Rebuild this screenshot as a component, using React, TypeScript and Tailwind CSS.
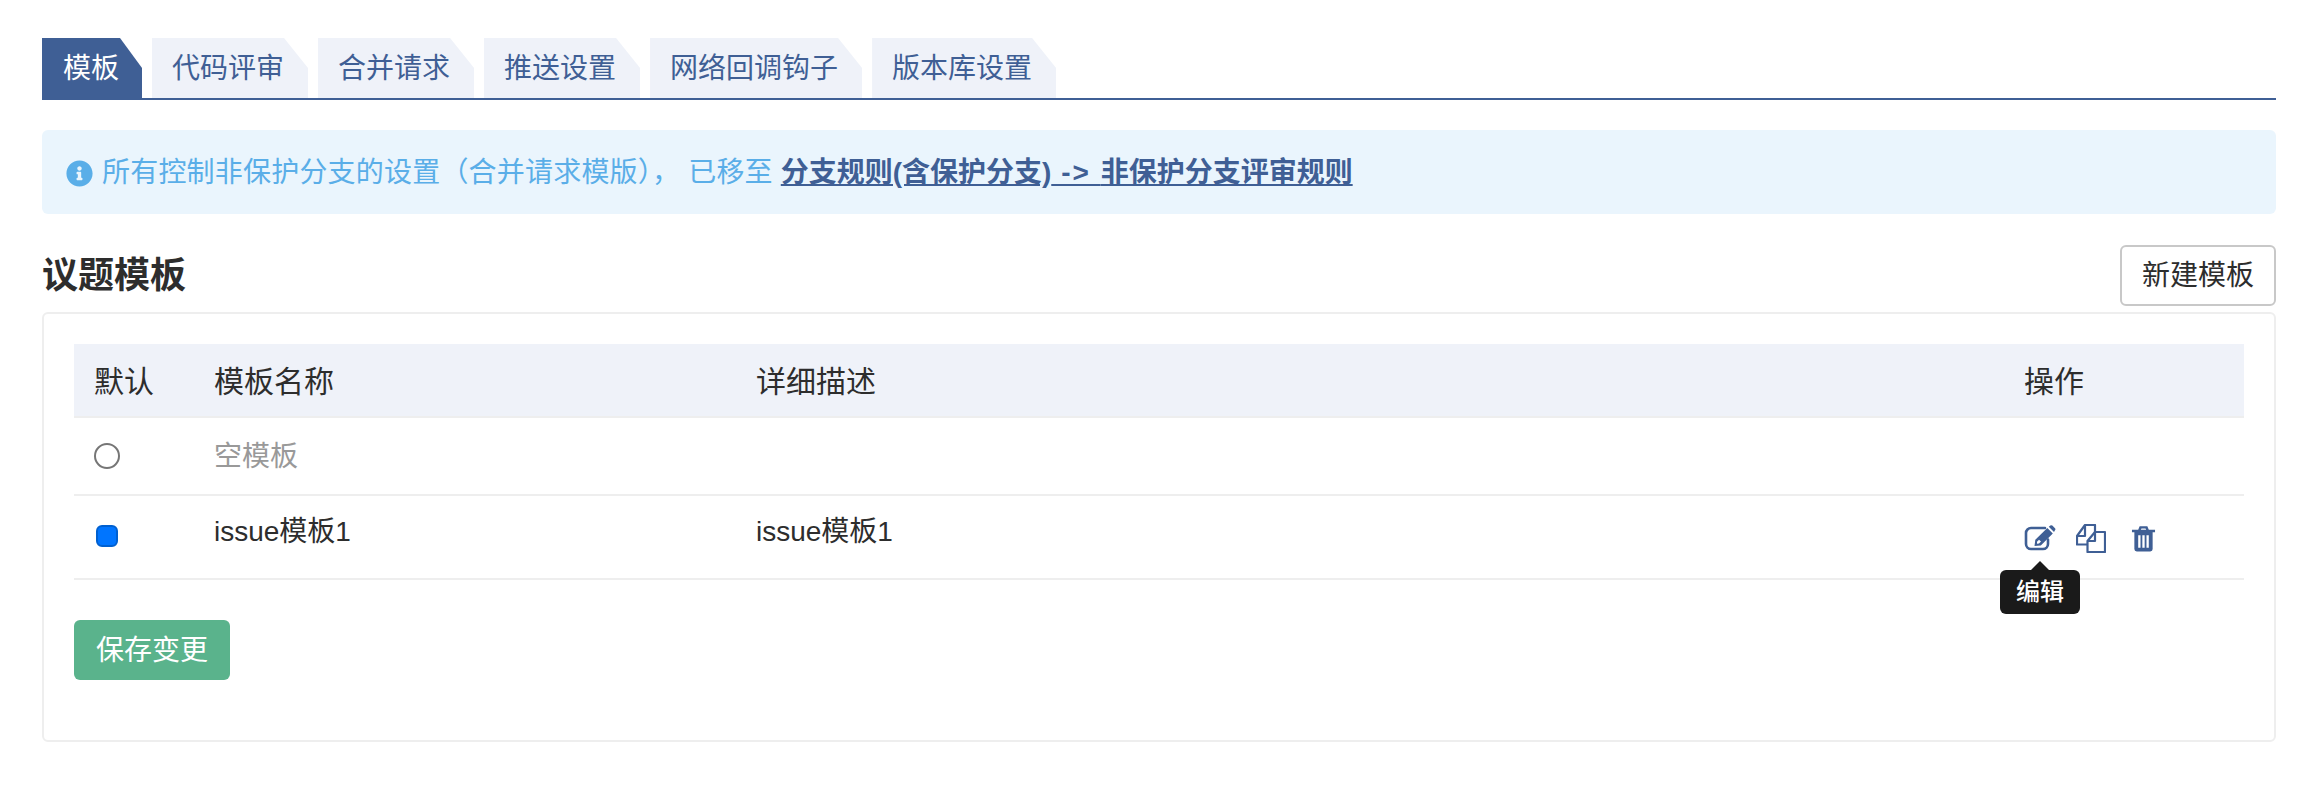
import React from 'react';
import { FaInfoCircle } from 'react-icons/fa';

const font = { fontFamily: '"Liberation Sans", "Noto Sans CJK SC", sans-serif' };

const tabs = ['模板', '代码评审', '合并请求', '推送设置', '网络回调钩子', '版本库设置'];

function EditIcon() {
  return (
    <svg width="32" height="26" viewBox="0 0 32 26" className="shrink-0">
      <path d="M21 3H7A5 5 0 0 0 2 8V19A5 5 0 0 0 7 24H19A5 5 0 0 0 24 19V14.500" fill="none" stroke="#3f5f95" strokeWidth="2.600" strokeLinecap="round" />
      <path fill="#3f5f95" fillRule="evenodd" d="M10.500 21 11.300 14.800 23.300 3 28.800 8.500 16.800 20.500ZM13 16.800 13 18.700 15 18.600 17 16.600 15 14.800Z" />
      <path fill="#3f5f95" d="M24.800 1.800 26.300.6a1.500 1.500 0 0 1 2 0L31 3.200a1.500 1.500 0 0 1 0 2L30 7Z" />
    </svg>
  );
}

function CopyIcon() {
  return (
    <svg width="30" height="29" viewBox="0 0 30 29" fill="none" stroke="#3f5f95" strokeWidth="2.200" strokeLinejoin="round" className="shrink-0">
      <path d="M11 20.500H1V12L9 1H19V8" />
      <path d="M9 1V12H1" />
      <path d="M11.500 28V17L19 8H29V28Z" />
      <path d="M19 8V17H11.500" />
    </svg>
  );
}

function TrashIcon() {
  return (
    <svg width="25" height="27" viewBox="0 0 26 28" className="shrink-0">
      <path fill="#3f5f95" d="M1 5h6.500L9 1.200h8L18.500 5H25v2.500h-2.500V25a2.500 2.500 0 0 1-2.500 2.500H6A2.500 2.500 0 0 1 3.500 25V7.500H1ZM10.200 5h5.600l-.7-1.500h-4.200ZM7.500 10.500v13h2.400v-13ZM11.800 10.500v13h2.400v-13ZM16.100 10.500v13h2.400v-13Z" fillRule="evenodd" />
    </svg>
  );
}

export default function App() {
  return (
    <div className="bg-white h-[786px] pl-[42px] pr-[28px] pt-[38px] text-[#2d2d2d] text-[28px] leading-[40px]" style={font}>
      <div className="flex gap-[10px] border-b-2 border-[#3f5f95]">
        {tabs.map((t, i) => (
          <div
            key={t}
            className={
              i === 0
                ? 'h-[60px] pl-[21px] pr-[23px] pt-[2px] flex items-center bg-[#3f5f95] text-white [clip-path:polygon(0_0,calc(100%-22px)_0,100%_30px,100%_100%,0_100%)]'
                : 'h-[60px] pl-[20px] pr-[24px] pt-[2px] flex items-center bg-[#eff2f9] text-[#3f5f95] [clip-path:polygon(0_0,calc(100%-24px)_0,100%_30px,100%_100%,0_100%)]'
            }
          >
            {t}
          </div>
        ))}
      </div>

      <div className="mt-[30px] h-[84px] rounded-[6px] bg-[#eaf5fd] pl-[24px] pr-[24px] pt-[2px] flex items-center text-[#5aaee8]">
        <FaInfoCircle className="text-[27px] mr-[9px] shrink-0" />
        <span className="tracking-[0.200px]">所有控制非保护分支的设置（合并请求模版）， 已移至&nbsp;</span>
        <a className="font-bold underline text-[#3f5f95]">分支规则(含保护分支)<span className="tracking-[2px]"> -&gt; </span>非保护分支评审规则</a>
      </div>

      <div className="mt-[31px] h-[61px] flex items-center justify-between">
        <h2 className="text-[36px] font-bold">议题模板</h2>
        <button className="h-[61px] w-[156px] rounded-[6px] border-2 border-[#c8c8c8] bg-white">新建模板</button>
      </div>

      <div className="mt-[6px] h-[430px] rounded-[6px] border-2 border-[#eeeeee] px-[30px] pt-[30px]">
        <table className="w-full table-fixed border-collapse">
          <colgroup>
            <col className="w-[140px]" />
            <col className="w-[542px]" />
            <col />
            <col className="w-[220px]" />
          </colgroup>
          <thead>
            <tr className="h-[73px] bg-[#eff2f9] border-b-2 border-[#eeeeee] text-left text-[30px]">
              <th className="pl-[20px] pt-[3px] font-normal">默认</th>
              <th className="pt-[3px] font-normal">模板名称</th>
              <th className="pt-[3px] font-normal">详细描述</th>
              <th className="pt-[3px] font-normal">操作</th>
            </tr>
          </thead>
          <tbody>
            <tr className="h-[78px] border-b-2 border-[#eeeeee]">
              <td className="pl-[20px]">
                <span className="block size-[26px] rounded-full border-2 border-[#767676] bg-white" />
              </td>
              <td className="pt-[2px] text-[#999999]">空模板</td>
              <td />
              <td />
            </tr>
            <tr className="h-[84px] border-b-2 border-[#eeeeee]">
              <td className="pl-[22px] pb-[2px]">
                <span className="block size-[22px] rounded-[6px] border-2 border-[#0060d0] bg-[#0075ff]" />
              </td>
              <td className="align-top pt-[16px]">issue模板1</td>
              <td className="align-top pt-[16px]">issue模板1</td>
              <td>
                <div className="relative flex items-center gap-[20px] mt-[2px]">
                  <EditIcon />
                  <CopyIcon />
                  <span className="ml-[5px]"><TrashIcon /></span>
                  <div className="absolute left-[-24px] top-[46px] z-10 h-[44px] w-[80px] rounded-[6px] bg-[#1a1a1a] text-white text-[24px] leading-[44px] text-center font-medium">
                    <span className="absolute left-[30px] top-[-9px] size-0 border-x-[10px] border-b-[10px] border-x-transparent border-b-[#1a1a1a]" />
                    编辑
                  </div>
                </div>
              </td>
            </tr>
          </tbody>
        </table>
        <button className="mt-[40px] block h-[60px] w-[156px] rounded-[6px] bg-[#5ab38c] pt-[2px] text-white">保存变更</button>
      </div>
    </div>
  );
}
